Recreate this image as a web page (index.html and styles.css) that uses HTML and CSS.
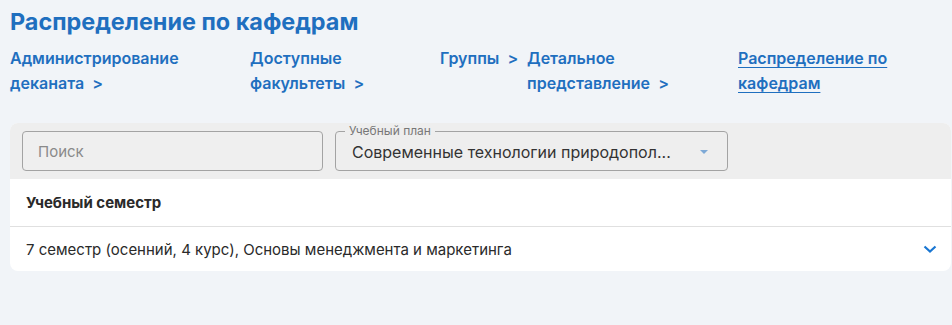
FILE: index.html
```html
<!DOCTYPE html>
<html lang="ru">
<head>
  <meta charset="UTF-8">
  <meta name="viewport" content="width=device-width, initial-scale=1.0">
  <title>Распределение по кафедрам</title>
  <link rel="stylesheet" href="styles.css">
</head>
<body>
  <h1 class="titulo">Распределение по кафедрам</h1>

  <!-- Хлебные крошки -->
  <nav class="migas">
    <a class="miga miga-1">Администрирование деканата &nbsp;&gt;</a>
    <a class="miga miga-2">Доступные факультеты &nbsp;&gt;</a>
    <a class="miga miga-3">Группы &nbsp;&gt;</a>
    <a class="miga miga-4">Детальное представление &nbsp;&gt;</a>
    <a class="miga miga-actual">Распределение по кафедрам</a>
  </nav>

  <div class="panel">
    <div class="barra">
      <div class="buscar">Поиск</div>
      <div class="selector">
        <span class="etiqueta">Учебный план</span>
        <span class="valor">Современные технологии природопол...</span>
        <span class="flecha"></span>
      </div>
    </div>

    <div class="fila fila-cabecera">Учебный семестр</div>
    <div class="fila">
      <span>7 семестр (осенний, 4 курс), Основы менеджмента и маркетинга</span>
      <svg class="chevron" width="14" height="8" viewBox="0 0 14 8">
        <polyline points="1.5,1.5 7,6.5 12.5,1.5" fill="none" stroke="#1976d2" stroke-width="2.2"/>
      </svg>
    </div>
  </div>
</body>
</html>
```

FILE: styles.css
```css
body {
  background: #f1f4f8;
  font-family: Inter, "Noto Sans", sans-serif;
  margin: 0;
  color: #222;
}

.titulo {
  color: #1f6fbf;
  font-size: 23.4px;
  font-weight: 700;
  line-height: 29px;
  margin: 0;
  padding: 7px 10px 0;
}

.migas {
  display: flex;
  padding: 10px 10px 0;
}

.miga {
  color: #1f6fbf;
  font-size: 16px;
  font-weight: 600;
  line-height: 25px;
  text-decoration: none;
  cursor: pointer;
}

.miga-1 { width: 240px; }
.miga-2 { width: 190px; }
.miga-3 { width: 87px; }
.miga-4 { width: 211px; }

.miga-actual {
  width: 180px;
  text-decoration: underline;
  text-underline-offset: 3px;
}

.panel {
  margin: 27px 1px 0 10px;
  background: white;
  border-radius: 8px;
  overflow: hidden;
}

.barra {
  display: flex;
  gap: 12px;
  background: #eeeeee;
  padding: 8px 12px;
}

.buscar {
  box-sizing: border-box;
  width: 301px;
  height: 40px;
  border: 1px solid #a3a3a3;
  border-radius: 4px;
  background: #efefef;
  color: #8a8a8a;
  font-size: 15px;
  line-height: 40px;
  padding-left: 15px;
}

.selector {
  position: relative;
  box-sizing: border-box;
  width: 393px;
  height: 40px;
  border: 1px solid #a3a3a3;
  border-radius: 4px;
  display: flex;
  align-items: center;
  padding: 0 16px;
}

.etiqueta {
  position: absolute;
  top: -8px;
  left: 9px;
  padding: 0 4px;
  background: #eeeeee;
  color: #777;
  font-size: 12px;
  line-height: 14px;
}

.valor {
  flex: 1;
  font-size: 16px;
  color: #333;
  white-space: nowrap;
  margin-top: 2px;
}

.flecha {
  width: 0;
  height: 0;
  border-left: 4.5px solid transparent;
  border-right: 4.5px solid transparent;
  border-top: 4.5px solid #7ea9d6;
  margin-right: 3px;
  margin-top: 2px;
}

.fila {
  display: flex;
  align-items: center;
  justify-content: space-between;
  padding: 0 14px 0 16px;
  height: 44px;
  font-size: 15px;
  color: #2a2a2a;
}

.fila-cabecera {
  height: 47px;
  font-weight: 700;
  border-bottom: 1px solid #e0e0e0;
}
```
